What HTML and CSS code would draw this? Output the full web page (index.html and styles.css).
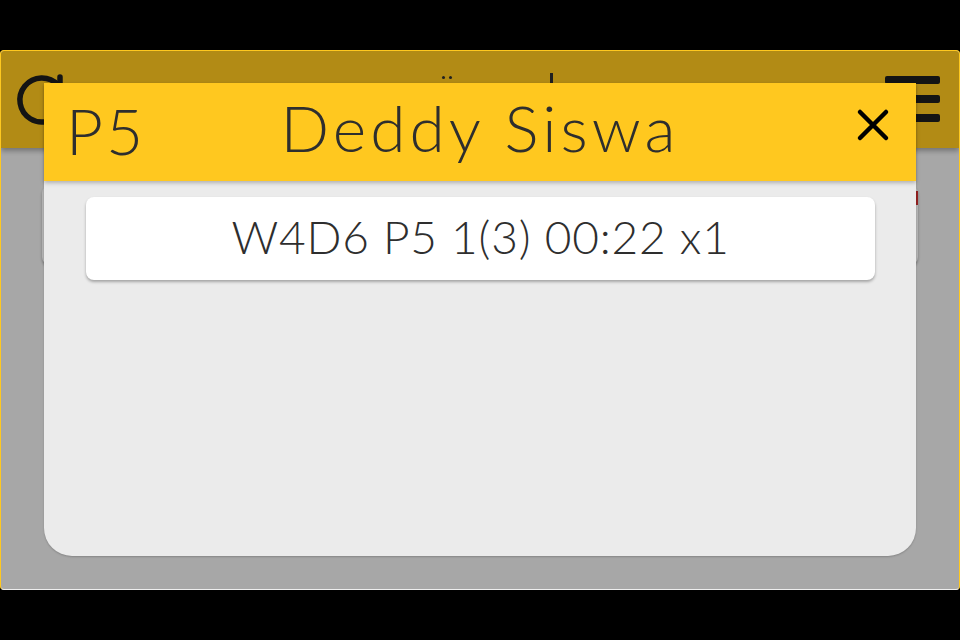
FILE: index.html
```html
<!DOCTYPE html>
<html lang="en">
<head>
    <meta charset="UTF-8">
    <meta name="viewport" content="width=device-width, initial-scale=1.0">
    <title>Antrian</title>
    <link rel="stylesheet" href="styles.css">
</head>
<body>
    <div class="screen">
        <div class="app">
            <div class="app-header">
                <svg class="refresh" width="56" height="60" viewBox="0 0 56 60">
                    <path d="M44 16 A22 22 0 1 0 48 40" fill="none" stroke="#1d1d1d" stroke-width="5.5" stroke-linecap="round"/>
                    <path d="M46 8 L46 19 L35 19" fill="none" stroke="#1d1d1d" stroke-width="5.5" stroke-linecap="round" stroke-linejoin="round"/>
                </svg>
                <div class="app-title">
                    <span class="dot"></span><span class="dot"></span>
                    <span class="stem"></span>
                </div>
                <div class="burger">
                    <span></span>
                    <span></span>
                    <span></span>
                </div>
            </div>
            <div class="app-content">
                <div class="queue-card">
                    <span class="badge"></span>
                </div>
            </div>

            <div class="overlay">
                <div class="modal">
                    <div class="modal-header">
                        <span class="modal-code">P5</span>
                        <span class="modal-title">Deddy Siswa</span>
                        <svg class="close" width="34" height="34" viewBox="0 0 34 34">
                            <path d="M4 4 L30 30 M30 4 L4 30" stroke="#000" stroke-width="4.5" stroke-linecap="round"/>
                        </svg>
                    </div>
                    <div class="modal-body">
                        <div class="entry">W4D6 P5 1(3) 00:22 x1</div>
                    </div>
                </div>
            </div>
        </div>
    </div>
</body>
</html>
```

FILE: styles.css
```css
*{
    padding: 0;
    margin: 0;
    box-sizing: border-box;
}
body{
    background-color: #000;
    font-family: "Lato", "Open Sans", sans-serif;
    font-weight: 300;
    color: #2e2e2e;
}
.screen{
    height: 640px;
    width: 960px;
    padding-top: 50px;
}
.app{
    position: relative;
    height: 540px;
    width: 960px;
    background-color: #f0f0f0;
    border: 1px solid #ffc81f;
    border-bottom-color: #eee;
    border-radius: 4px;
    overflow: hidden;
}
.app-header{
    height: 97px;
    background-color: #ffc81f;
    display: flex;
    align-items: center;
    justify-content: space-between;
    padding: 0 19px 0 13px;
    box-shadow: rgba(0, 0, 0, 0.3) 0px 3px 5px;
}
.refresh{
    margin-top: -2px;
}
/* only the tops of the title letters peek out above the modal */
.app-title{
    width: 120px;
    height: 60px;
    display: flex;
    align-items: flex-start;
    padding-top: 3px;
    margin-left: 48px;
}
.dot{
    width: 3px;
    height: 3px;
    border-radius: 50%;
    background-color: #2e2e2e;
    margin-right: 4px;
    margin-top: 3px;
}
.stem{
    width: 3px;
    height: 30px;
    background-color: #2e2e2e;
    margin-left: 94px;
}
.burger{
    display: flex;
    flex-direction: column;
    gap: 11px;
    margin-top: -2px;
}
.burger span{
    display: block;
    width: 55px;
    height: 8px;
    border-radius: 2px;
    background-color: #1d1d1d;
}
.app-content{
    padding: 37px 41px 0 41px;
}
.queue-card{
    position: relative;
    height: 80px;
    background-color: #fff;
    border-radius: 8px;
    box-shadow: rgba(0, 0, 0, 0.3) 0px 2px 3px;
}
.badge{
    position: absolute;
    right: 0;
    top: 6px;
    width: 2px;
    height: 14px;
    background-color: #d32f2f;
}
.overlay{
    position: absolute;
    top: 0;
    left: 0;
    right: 0;
    bottom: 0;
    background-color: rgba(0, 0, 0, 0.3);
    display: flex;
    justify-content: center;
    padding-top: 32px;
}
.modal{
    width: 872px;
    height: 473px;
    background-color: #ebebeb;
    border-radius: 0 0 28px 28px;
    display: flex;
    flex-direction: column;
    box-shadow: rgba(0, 0, 0, 0.2) 0px 1px 2px;
}
.modal-header{
    position: relative;
    height: 98px;
    background-color: #ffc81f;
    display: flex;
    align-items: center;
    justify-content: center;
    box-shadow: rgba(0, 0, 0, 0.25) 0px 2px 4px;
}
.modal-code{
    position: absolute;
    left: 22px;
    top: 9px;
    font-size: 64px;
    letter-spacing: 3px;
}
.modal-title{
    font-size: 64px;
    letter-spacing: 4px;
    margin-top: -10px;
}
.close{
    position: absolute;
    right: 26px;
    top: 25px;
}
.modal-body{
    padding: 16px 41px 0 42px;
}
.entry{
    height: 83px;
    background-color: #fff;
    border-radius: 8px;
    box-shadow: rgba(0, 0, 0, 0.3) 0px 2px 3px;
    font-size: 46px;
    letter-spacing: 0.8px;
    text-align: center;
    line-height: 80px;
}
```
